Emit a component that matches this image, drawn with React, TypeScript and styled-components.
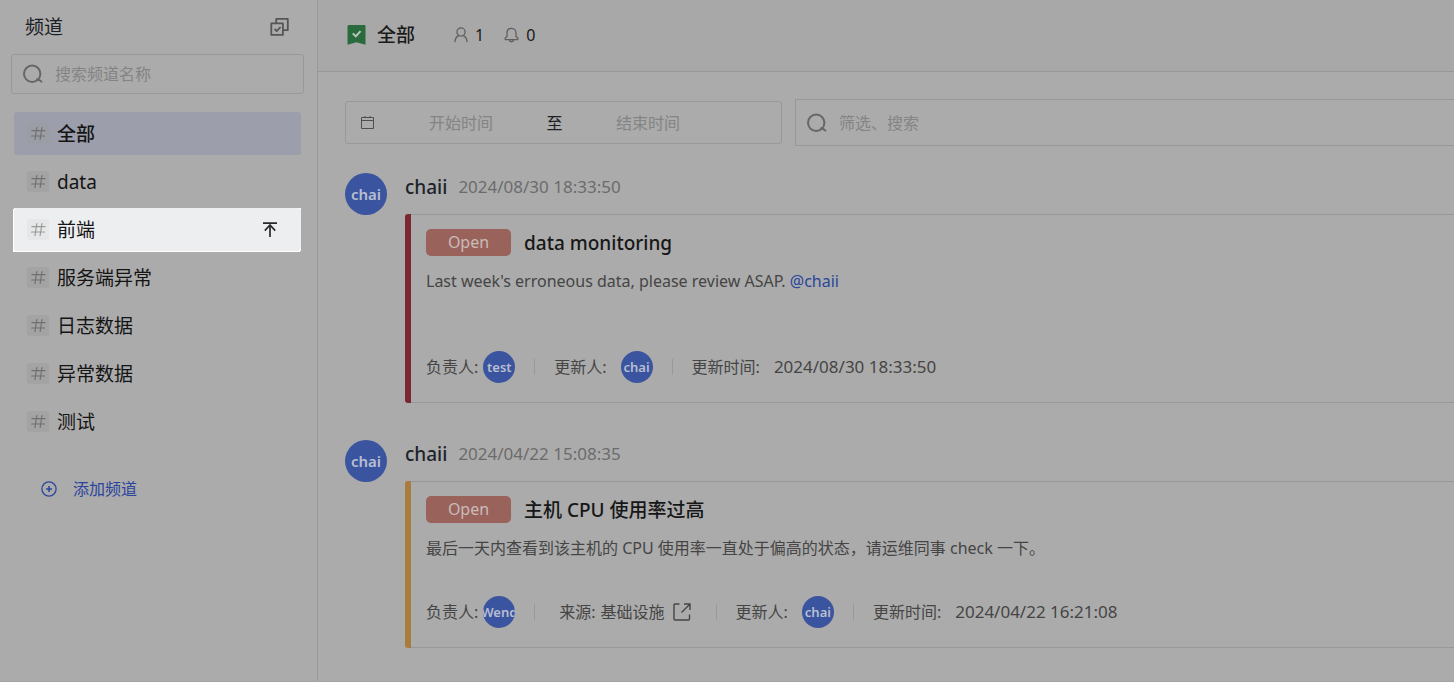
import React from "react";
import styled, { createGlobalStyle } from "styled-components";

const GlobalStyle = createGlobalStyle`
  *, *::before, *::after { box-sizing: border-box; }
  body {
    margin: 0;
    background: #ababab;
    color: #454545;
    font-family: "Noto Sans", "Noto Sans CJK SC", sans-serif;
    font-size: 16px;
    line-height: 24px;
  }
  h1, h2, h3, p, ul { margin: 0; padding: 0; font-weight: 400; }
  ul { list-style: none; }
  button, input { font: inherit; color: inherit; border: 0; padding: 0; margin: 0; background: none; }
  svg { display: block; flex: none; }
`;

const Page = styled.div`
  display: flex;
  min-height: 100vh;
  overflow: hidden;
  border-bottom: 1px solid #a3a3a3;
`;

const Sidebar = styled.aside`
  flex: none;
  width: 318px;
  padding: 13px 13px 0 11px;
  border-right: 1px solid #999999;
`;

const SidebarHead = styled.div`
  display: flex;
  align-items: center;
  justify-content: space-between;
  height: 28px;
  padding: 0 14px;
  color: #1a2025;
`;

const SidebarTitle = styled.h2`
  font-size: 19px;
  line-height: 28px;
`;

const IconButton = styled.button`
  color: #555555;
`;

const SearchBox = styled.label<{ $height: number; $square?: boolean }>`
  display: flex;
  align-items: center;
  gap: 11px;
  height: ${(p) => p.$height}px;
  padding-left: 10px;
  border: 1px solid #989898;
  border-radius: ${(p) => (p.$square ? 0 : 3)}px;
  color: #666666;
`;

const TextInput = styled.input`
  flex: 1;
  min-width: 0;
  height: 24px;
  outline: none;
  &::placeholder { color: #848484; opacity: 1; }
`;

const SidebarSearch = styled.div`
  margin-top: 13px;
`;

const ChannelList = styled.ul`
  display: flex;
  flex-direction: column;
  gap: 5px;
  margin: 18px 3px 0;
`;

const Channel = styled.button<{ $state?: "active" | "hover" }>`
  display: flex;
  align-items: center;
  width: 100%;
  height: 43px;
  padding: 0 23px 0 13px;
  border-radius: 3px;
  background: ${(p) =>
    p.$state === "active" ? "#9c9eab" : p.$state === "hover" ? "#edeef0" : "transparent"};
  color: #141414;
  font-size: 19px;
  font-weight: ${(p) => (p.$state === "active" ? 500 : 400)};
  line-height: 28px;
  text-align: left;
`;

const Spotlight = styled.div<{ $on?: boolean }>`
  background: ${(p) => (p.$on ? "#ffffff" : "transparent")};
  box-shadow: ${(p) => (p.$on ? "-1px 1px 0 #ffffff" : "none")};
`;

const HashBox = styled.span<{ $state?: "active" | "hover" }>`
  flex: none;
  margin-right: 8px;
  border-radius: 3px;
  background: ${(p) =>
    p.$state === "active" ? "#9b9da4" : p.$state === "hover" ? "#e6e7e8" : "#a3a3a3"};
  color: ${(p) => (p.$state === "hover" ? "#9a9a96" : "#707070")};
`;

const ChannelName = styled.span`
  flex: 1;
`;

const AddChannel = styled.button`
  display: flex;
  align-items: center;
  gap: 16px;
  height: 24px;
  margin: 34px 0 0 30px;
  color: #2a459c;
`;

const Main = styled.main`
  flex: 1;
  min-width: 0;
`;

const TopBar = styled.header`
  display: flex;
  align-items: center;
  height: 72px;
  padding: 0 0 2px 29px;
  border-bottom: 1px solid #989898;
  background: #a8a8a8;
  color: #1a1a1a;
`;

const TopTitle = styled.h1`
  margin: 0 39px 0 11px;
  font-size: 19px;
  font-weight: 500;
  line-height: 28px;
`;

const Count = styled.span`
  display: flex;
  align-items: center;
  gap: 7px;
  margin-right: 20px;
  svg { color: #606060; }
`;

const Content = styled.div`
  padding: 27px 0 0 27px;
`;

const Filters = styled.div`
  display: flex;
  align-items: center;
  gap: 13px;
`;

const DateRange = styled.div`
  display: flex;
  align-items: center;
  flex: none;
  width: 437px;
  height: 43px;
  padding-left: 15px;
  border: 1px solid #989898;
  border-radius: 3px;
  color: #1a2025;
`;

const DateInput = styled.input`
  width: 152px;
  height: 24px;
  text-align: center;
  outline: none;
  &::placeholder { color: #848484; opacity: 1; }
`;

const DateIcon = styled.span`
  margin-right: 11px;
  color: #4c5056;
`;

const To = styled.span`
  width: 35px;
  text-align: center;
`;

const FilterSearch = styled.div`
  flex: 1;
  min-width: 0;
  margin-right: -1px;
`;

const Messages = styled.section`
  display: flex;
  flex-direction: column;
  gap: 37px;
  margin-top: 27px;
`;

const Message = styled.article`
  display: flex;
  gap: 18px;
`;

const Avatar = styled.span<{ $small?: boolean }>`
  display: inline-flex;
  align-items: center;
  justify-content: center;
  flex: none;
  width: ${(p) => (p.$small ? 32 : 42)}px;
  height: ${(p) => (p.$small ? 32 : 42)}px;
  border-radius: 50%;
  overflow: hidden;
  background: #3a54a0;
  color: #b9bfd0;
  font-size: ${(p) => (p.$small ? 13 : 15)}px;
  font-weight: 600;
`;

const MessageBody = styled.div`
  flex: 1;
  min-width: 0;
`;

const MessageHead = styled.div`
  display: flex;
  align-items: center;
  gap: 11px;
  height: 28px;
  margin-bottom: 13px;
  color: #6b6b6b;
`;

const Time = styled.time`
  font-size: 17px;
`;

const Author = styled.h2`
  color: #1c2329;
  font-size: 19px;
  font-weight: 500;
`;

const Card = styled.div`
  display: flex;
`;

const Bar = styled.span<{ $color: string }>`
  flex: none;
  width: 6px;
  border-radius: 3px 0 0 3px;
  background: ${(p) => p.$color};
`;

const CardBody = styled.div`
  flex: 1;
  min-width: 0;
  padding: 14px 0 19px 15px;
  border: solid #989898;
  border-width: 1px 0;
`;

const CardTitleRow = styled.div`
  display: flex;
  align-items: center;
  gap: 13px;
  height: 27px;
`;

const Tag = styled.span`
  width: 85px;
  height: 27px;
  border-radius: 5px;
  background: #99625a;
  color: #c9bcba;
  line-height: 27px;
  text-align: center;
`;

const CardTitle = styled.h3`
  color: #171717;
  font-size: 19px;
  font-weight: 500;
`;

const Description = styled.p<{ $tall?: boolean }>`
  min-height: ${(p) => (p.$tall ? 82 : 60)}px;
  margin-top: 13px;
`;

const Mention = styled.a`
  color: #2a459c;
  text-decoration: none;
`;

const Meta = styled.div`
  display: flex;
  align-items: center;
  height: 32px;
`;

const MetaItem = styled.span<{ $gap?: number; $wide?: boolean }>`
  display: flex;
  align-items: center;
  gap: ${(p) => p.$gap ?? 14}px;
  padding: ${(p) => (p.$wide ? "0 6px 0 5px" : "0")};
  white-space: nowrap;
`;

const Divider = styled.span`
  flex: none;
  width: 1px;
  height: 16px;
  margin: 0 19px;
  background: #999999;
`;

const SourceLink = styled.a`
  display: flex;
  align-items: center;
  gap: 8px;
  color: inherit;
  text-decoration: none;
`;

const stroke = { fill: "none", stroke: "currentColor" } as const;

const SearchIcon = () => (
  <svg width="22" height="20" {...stroke} strokeWidth="2">
    <circle cx="10.2" cy="9.8" r="8.2" />
    <path d="M15.2 15.2c1.6.4 2.6.8 4.2 2.4" strokeLinecap="round" />
  </svg>
);

const MultiSelectIcon = () => (
  <svg width="20" height="20" {...stroke} strokeWidth="1.8" strokeLinejoin="round">
    <rect x="1.3" y="6.3" width="11.6" height="11.6" />
    <path d="M6.2 6V1.8h11.6v11.4H13" />
    <path d="m4.6 12 2.1 2.1 3.9-4.1" />
  </svg>
);

const HashIcon = () => (
  <svg width="22" height="21" {...stroke} strokeWidth="1.2" strokeLinecap="round">
    <path d="M5 7.7h13M4.5 13h13M9.8 4.5 8 16.5M15 4.5l-1.9 12" />
  </svg>
);

const PinTopIcon = () => (
  <svg width="16" height="16" {...stroke} stroke="#262b28" strokeWidth="1.7">
    <path d="M1 1.2h14M8 2.8v12.2M2.8 8.6 8 3 13.2 8.6" />
  </svg>
);

const AddIcon = () => (
  <svg width="16" height="16" {...stroke} strokeWidth="1.3">
    <circle cx="8" cy="8" r="7.1" />
    <path d="M8 5v6M5 8h6" strokeWidth="1.5" />
  </svg>
);

const BookmarkIcon = () => (
  <svg width="19" height="20">
    <path d="M2 0h15.5q1 0 1 1v18.8L9.5 17.3.5 19.8V1.5Q.5 0 2 0z" fill="#2a6b3e" />
    <path d="m5.8 8.4 3 3 4.7-5.2" {...stroke} stroke="#b8c8bc" strokeWidth="2" />
  </svg>
);

const UserIcon = () => (
  <svg width="14" height="16" {...stroke} strokeWidth="1.3" strokeLinecap="round">
    <circle cx="7" cy="5" r="4.1" />
    <path d="M1 14.6c.2-3 1.5-4.8 3.6-5.9M13 14.6c-.2-3-1.500-4.8-3.6-5.9" />
  </svg>
);

const BellIcon = () => (
  <svg width="15" height="16" {...stroke} strokeWidth="1.3" strokeLinejoin="round">
    <path d="M7.5 1.3C4.5 1.3 3 3.3 3 6v3.500L1.2 11v1.600h12.600V11L12 9.500V6c0-2.700-1.500-4.700-4.500-4.700zM5.500 13c.5 2.300 3.500 2.300 4 0" />
  </svg>
);

const CalendarIcon = () => (
  <svg width="13" height="13" {...stroke} strokeWidth="1">
    <path d="M.5 1.5h12v11H.5zM.5 4.5h12M4 0v2M9 0v2" />
  </svg>
);

const ExternalIcon = () => (
  <svg width="18" height="18" {...stroke} strokeWidth="1.4">
    <path d="M6.5 1H2Q1 1 1 2v14q0 1 1 1h13.5q1 0 1-1v-4.500M11 1h6v6M17 1 8.500 9.500" />
  </svg>
);

type ChannelState = "active" | "hover" | undefined;

const channels: { name: string; state?: ChannelState }[] = [
  { name: "全部", state: "active" },
  { name: "data" },
  { name: "前端", state: "hover" },
  { name: "服务端异常" },
  { name: "日志数据" },
  { name: "异常数据" },
  { name: "测试" },
];

interface IssueProps {
  time: string;
  color: string;
  title: string;
  tall?: boolean;
  owner: string;
  source?: string;
  updated: string;
  children: React.ReactNode;
}

const Issue = ({ time, color, title, tall, owner, source, updated, children }: IssueProps) => (
  <Message>
    <Avatar>chai</Avatar>
    <MessageBody>
      <MessageHead>
        <Author>chaii</Author>
        <Time>{time}</Time>
      </MessageHead>
      <Card>
        <Bar $color={color} />
        <CardBody>
          <CardTitleRow>
            <Tag>Open</Tag>
            <CardTitle>{title}</CardTitle>
          </CardTitleRow>
          <Description $tall={tall}>{children}</Description>
          <Meta>
            <MetaItem $gap={5}>
              负责人:<Avatar $small>{owner}</Avatar>
            </MetaItem>
            <Divider />
            {source && (
              <>
                <MetaItem $gap={5} $wide>
                  来源:
                  <SourceLink href="#source">
                    {source}
                    <ExternalIcon />
                  </SourceLink>
                </MetaItem>
                <Divider />
              </>
            )}
            <MetaItem>
              更新人:<Avatar $small>chai</Avatar>
            </MetaItem>
            <Divider />
            <MetaItem>
              更新时间:<Time>{updated}</Time>
            </MetaItem>
          </Meta>
        </CardBody>
      </Card>
    </MessageBody>
  </Message>
);

export default function App() {
  return (
    <>
      <GlobalStyle />
      <Page>
        <Sidebar>
          <SidebarHead>
            <SidebarTitle>频道</SidebarTitle>
            <IconButton aria-label="批量选择">
              <MultiSelectIcon />
            </IconButton>
          </SidebarHead>
          <SidebarSearch>
            <SearchBox $height={40}>
              <SearchIcon />
              <TextInput type="text" placeholder="搜索频道名称" aria-label="搜索频道名称" />
            </SearchBox>
          </SidebarSearch>
          <ChannelList>
            {channels.map(({ name, state }) => (
              <li key={name}>
                <Spotlight $on={state === "hover"}>
                  <Channel $state={state}>
                    <HashBox $state={state}>
                      <HashIcon />
                    </HashBox>
                    <ChannelName>{name}</ChannelName>
                    {state === "hover" && <PinTopIcon />}
                  </Channel>
                </Spotlight>
              </li>
            ))}
          </ChannelList>
          <AddChannel>
            <AddIcon />
            添加频道
          </AddChannel>
        </Sidebar>
        <Main>
          <TopBar>
            <BookmarkIcon />
            <TopTitle>全部</TopTitle>
            <Count>
              <UserIcon />1
            </Count>
            <Count>
              <BellIcon />0
            </Count>
          </TopBar>
          <Content>
            <Filters>
              <DateRange>
                <DateIcon>
                  <CalendarIcon />
                </DateIcon>
                <DateInput type="text" placeholder="开始时间" aria-label="开始时间" />
                <To>至</To>
                <DateInput type="text" placeholder="结束时间" aria-label="结束时间" />
              </DateRange>
              <FilterSearch>
                <SearchBox $height={47} $square>
                  <SearchIcon />
                  <TextInput type="text" placeholder="筛选、搜索" aria-label="筛选、搜索" />
                </SearchBox>
              </FilterSearch>
            </Filters>
            <Messages>
              <Issue
                time="2024/08/30 18:33:50"
                color="#7c2631"
                title="data monitoring"
                tall
                owner="test"
                updated="2024/08/30 18:33:50"
              >
                Last week's erroneous data, please review ASAP. <Mention href="#chaii">@chaii</Mention>
              </Issue>
              <Issue
                time="2024/04/22 15:08:35"
                color="#a87c3c"
                title="主机 CPU 使用率过高"
                owner="Wend"
                source="基础设施"
                updated="2024/04/22 16:21:08"
              >
                最后一天内查看到该主机的 CPU 使用率一直处于偏高的状态，请运维同事 check 一下。
              </Issue>
            </Messages>
          </Content>
        </Main>
      </Page>
    </>
  );
}
